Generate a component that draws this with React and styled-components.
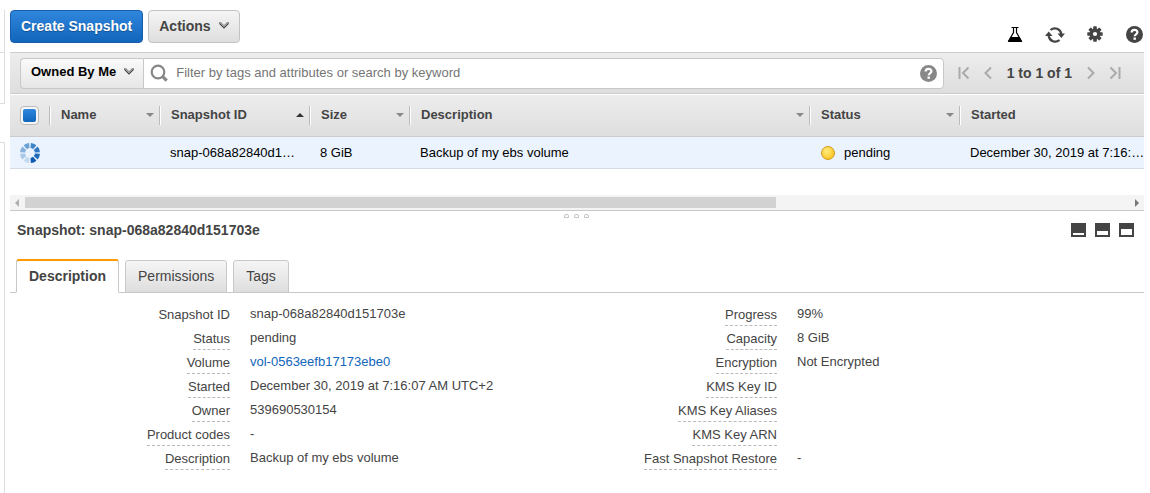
import React from "react";
import styled, { createGlobalStyle, css } from "styled-components";

const GlobalStyle = createGlobalStyle`
  *, *::before, *::after { box-sizing: border-box; }
  body {
    margin: 0;
    background: #fff;
    color: #444;
    font: 13px/16px "Liberation Sans", Arial, sans-serif;
  }
  button, input { font-family: inherit; }
`;

const Page = styled.div`
  display: flex;
  gap: 5px;
  min-height: 100vh;
  padding-right: 6px;
`;

const NavEdge = styled.aside`
  display: flex;
  flex-direction: column;
  flex: 0 0 5px;
  padding-top: 10px;
`;

const NavBlock = styled.div`
  height: ${(p) => p.$height};
  flex: ${(p) => (p.$fill ? "1" : "none")};
  margin-top: ${(p) => (p.$fill ? "38px" : "0")};
  border-right: 1px solid #ddd;
  border-top: ${(p) => (p.$fill ? "1px solid #ddd" : "0")};
  border-bottom: ${(p) => (p.$fill ? "0" : "1px solid #ddd")};
`;

const Main = styled.main`
  flex: 1;
  min-width: 0;
`;

const TopBar = styled.header`
  display: flex;
  gap: 5px;
  height: 52px;
  padding-top: 10px;
`;

const Button = styled.button`
  display: flex;
  align-items: center;
  gap: 8px;
  height: 33px;
  padding: 0 10px 2px;
  border: 1px solid #c3c3c3;
  border-radius: 4px;
  background: linear-gradient(#f5f5f5, #dedede);
  color: #444;
  font-size: 14px;
  font-weight: bold;
  white-space: nowrap;
  ${(p) =>
    p.$primary &&
    css`
      border-color: #1a5ca8;
      background: linear-gradient(#2f86dd, #1166bb);
      color: #fff;
      text-shadow: 0 1px 1px rgba(0, 0, 0, 0.3);
    `}
`;

const TopIcons = styled.div`
  display: flex;
  gap: 20px;
  margin-left: auto;
  padding: 14px 1px 0 0;
`;

const IconButton = styled.button`
  display: flex;
  align-items: center;
  justify-content: center;
  width: ${(p) => p.$width || 20}px;
  height: 20px;
  padding: 0;
  border: 0;
  background: none;
  color: ${(p) => p.$color || "#444"};
`;

const Toolbar = styled.section`
  display: flex;
  align-items: center;
  height: 42px;
  padding: 0 19px 0 10px;
  border: solid #ccc;
  border-width: 1px 0;
  background: linear-gradient(#ededed, #dedede);
`;

const OwnerButton = styled.button`
  display: flex;
  align-items: center;
  gap: 8px;
  height: 31px;
  padding: 0 9px 4px 10px;
  border: 1px solid #c8c8c8;
  border-right: 0;
  border-radius: 4px 0 0 4px;
  background: linear-gradient(#fafafa, #e6e6e6);
  color: #000;
  font-size: 13px;
  font-weight: bold;
  white-space: nowrap;
`;

const SearchBox = styled.div`
  display: flex;
  flex: 1;
  align-items: center;
  gap: 8px;
  height: 31px;
  padding: 0 4px 0 6px;
  border: 1px solid #c8c8c8;
  border-radius: 0 4px 4px 0;
  background: #fff;
`;

const SearchInput = styled.input`
  flex: 1;
  min-width: 0;
  height: 28px;
  padding: 0 0 2px;
  border: 0;
  outline: 0;
  background: none;
  color: #444;
  font-size: 13px;
  &::placeholder { color: #757575; opacity: 1; }
`;

const Pager = styled.nav`
  display: flex;
  align-items: center;
  gap: 4px;
  padding-left: 10px;
`;

const PageCount = styled.span`
  padding: 0 5px;
  font-size: 14px;
  font-weight: bold;
  white-space: nowrap;
`;

const TableScroller = styled.div`
  overflow: hidden;
`;

const Table = styled.table`
  width: calc(100% + 3px);
  table-layout: fixed;
  border-collapse: separate;
  border-spacing: 0;
`;

const Col = styled.col`
  width: ${(p) => (p.$width ? `${p.$width}px` : "auto")};
`;

const HeadCell = styled.th`
  height: 43px;
  padding: 0 0 1px;
  border-top: 1px solid #fff;
  border-bottom: 1px solid #ccc;
  background: linear-gradient(#ededed, #dedede);
  text-align: left;
`;

const HeadInner = styled.div`
  display: flex;
  align-items: center;
  justify-content: space-between;
  height: 19px;
  padding: 0 5px ${(p) => (p.$first ? 0 : 1)}px ${(p) => (p.$first ? 10 : 11)}px;
  border-left: ${(p) => (p.$first ? "0" : "1px solid #bbb")};
  box-shadow: ${(p) => (p.$first ? "none" : "inset 1px 0 #fff")};
`;

const SortArrow = styled.span`
  border: solid transparent;
  border-width: 0 4px;
  ${(p) =>
    p.$up
      ? css`border-bottom: 4px solid #333;`
      : css`border-top: 4px solid #888;`}
`;

const Checkbox = styled.input`
  appearance: none;
  width: 19px;
  height: 19px;
  margin: 0;
  border: 1px solid #bbb;
  border-radius: 4px;
  background: #f6f6f6;
  &:checked::before {
    content: "";
    display: block;
    height: 13px;
    margin: 2px;
    border-radius: 2px;
    background: linear-gradient(#2f86dd, #1166bb);
  }
`;

const Cell = styled.td`
  height: 32px;
  padding: 0 ${(p) => (p.$last ? 0 : 12)}px 0 ${(p) => (p.$icon ? 10 : 11)}px;
  overflow: hidden;
  border-bottom: 1px solid #d5dbe3;
  background: #eaf3fe;
  color: #000;
  text-overflow: ellipsis;
  white-space: nowrap;
  svg { display: block; }
`;

const StatusText = styled.span`
  display: flex;
  align-items: center;
  gap: 9px;
`;

const StatusDot = styled.span`
  width: 14px;
  height: 14px;
  margin-left: 1px;
  border: 1px solid #d19a1c;
  border-radius: 50%;
  background: radial-gradient(circle at 40% 35%, #ffec80, #fdc92c 70%, #eda81a);
`;

const ScrollBar = styled.div`
  display: flex;
  align-items: center;
  gap: 6px;
  height: 16px;
  margin-top: 26px;
  padding: 0 5px;
  border-bottom: 1px solid #c8c8c8;
  background: #f4f4f4;
`;

const ScrollTrack = styled.div`
  flex: 1;
  height: 11px;
`;

const ScrollThumb = styled.div`
  width: 68%;
  height: 100%;
  background: #d2d2d2;
`;

const ScrollArrow = styled.span`
  border: solid transparent;
  border-width: 4px 0;
  ${(p) =>
    p.$right
      ? css`border-left: 4px solid #777;`
      : css`border-right: 4px solid #b0b0b0;`}
`;

const Grip = styled.div`
  display: flex;
  justify-content: center;
  gap: 5px;
  height: 7px;
  padding: 3px 2px 0 0;
`;

const GripDot = styled.span`
  width: 5px;
  height: 4px;
  border: 1px solid #c4c4c4;
  border-radius: 2px 2px 0 0;
`;

const DetailHeader = styled.div`
  display: flex;
  align-items: center;
  justify-content: space-between;
  height: 24px;
  padding: 0 10px 0 7px;
`;

const DetailTitle = styled.h2`
  margin: 0;
  font-size: 14px;
  line-height: 18px;
`;

const PaneButtons = styled.div`
  display: flex;
  gap: 9px;
`;

const PaneButton = styled.button`
  display: flex;
  align-items: flex-end;
  width: 15px;
  height: 14px;
  padding: 2px;
  border: 0;
  background: #444;
  &::after {
    content: "";
    width: 11px;
    height: ${(p) => p.$fill}px;
    background: #fff;
  }
`;

const Tabs = styled.div`
  display: flex;
  align-items: flex-end;
  gap: 6px;
  height: 51px;
  padding-left: 6px;
  border-bottom: 1px solid #c8c8c8;
`;

const Tab = styled.button`
  height: 33px;
  margin-bottom: -1px;
  padding: 0 12px 2px;
  border: 1px solid #c8c8c8;
  border-radius: 3px 3px 0 0;
  background: linear-gradient(#f5f5f5, #dedede);
  color: #444;
  font-size: 14px;
  ${(p) =>
    p.$active &&
    css`
      height: 34px;
      border-top: 2px solid #f90;
      border-bottom-color: #fff;
      background: #fff;
      font-weight: bold;
    `}
`;

const Details = styled.div`
  display: grid;
  grid-template-columns: 1fr 1fr;
  padding: 9px 40px 20px 0;
`;

const DetailList = styled.dl`
  display: grid;
  grid-template-columns: 220px 1fr;
  grid-auto-rows: 24px;
  column-gap: 20px;
  margin: 0;
`;

const Term = styled.dt`
  justify-self: end;
  height: 24px;
  padding-top: 5px;
  border-bottom: ${(p) => (p.$plain ? "0" : "1px dashed #bbb")};
  white-space: nowrap;
`;

const Value = styled.dd`
  margin: 0;
  padding-top: 4px;
  white-space: nowrap;
`;

const Link = styled.a`
  color: #1166bb;
  text-decoration: none;
`;

const Chevron = () => (
  <svg width="10" height="7" viewBox="0 0 10 7" aria-hidden="true">
    <path d="M0 0h2l3 3 3-3h2v2L5 7 0 2z" fill="#999" />
    <path d="M.5 1.5 5 6l4.500-4.500" fill="none" stroke="#444" strokeWidth="1" />
  </svg>
);

const FlaskIcon = () => (
  <svg width="16" height="16" viewBox="0 0 16 16" aria-hidden="true">
    <path d="M4.500 1.500h7M6.500 1.500v5L2 14.500h12L9.500 6.500v-5" fill="none" stroke="currentColor" strokeWidth="1.200" />
    <path d="M3.500 11h9l2.800 5H.7z" fill="currentColor" />
  </svg>
);

const RefreshIcon = () => (
  <svg width="20" height="17" viewBox="0 0 20 17" aria-hidden="true">
    <path d="M5.500 4A6.500 6.500 0 0 1 16.300 8M14.500 14A6.500 6.500 0 0 1 3.700 10" fill="none" stroke="currentColor" strokeWidth="2.200" />
    <path d="M12.500 7.500H20L16.300 12zM0 10h7.500L3.700 5.500z" fill="currentColor" />
  </svg>
);

const GearIcon = () => (
  <svg width="16" height="16" viewBox="0 0 16 16" aria-hidden="true">
    <g fill="currentColor">
      {[0, 45, 90, 135].map((a) => (
        <rect key={a} x="6.200" y="0.300" width="3.600" height="15.400" rx=".6" transform={`rotate(${a} 8 8)`} />
      ))}
      <circle cx="8" cy="8" r="5.500" />
    </g>
    <circle cx="8" cy="8" r="2.100" fill="#fff" />
  </svg>
);

const HelpIcon = () => (
  <svg width="17" height="17" viewBox="0 0 17 17" aria-hidden="true">
    <circle cx="8.500" cy="8.500" r="8.500" fill="currentColor" />
    <path d="M5.600 6.500C5.600 3 11.400 3 11.400 6.300c0 2-2.700 2-2.700 4" fill="none" stroke="#fff" strokeWidth="2.200" />
    <rect x="7.500" y="11.500" width="2.400" height="2.300" fill="#fff" />
  </svg>
);

const SearchIcon = () => (
  <svg width="18" height="18" viewBox="0 0 18 18" aria-hidden="true">
    <circle cx="8" cy="8" r="6.300" fill="none" stroke="#888" strokeWidth="2.200" />
    <path d="m12.700 12.700 4 4" stroke="#888" strokeWidth="3.200" />
  </svg>
);

const PagerIcon = ({ end, flip }) => (
  <svg width="12" height="14" viewBox="0 0 12 14" aria-hidden="true">
    <path
      d={end ? "M1.500 1v12M10.500 1.500 5 7l5.500 5.500" : "M9 1.500 3.500 7 9 12.500"}
      fill="none"
      stroke="currentColor"
      strokeWidth="2"
      transform={flip ? "translate(12 0) scale(-1 1)" : undefined}
    />
  </svg>
);

const spinnerColors = [
  "#3f86c8", "#3079c2", "#1f6bb8", "#0f5bb0",
  "#c3daef", "#a8c8e8", "#86b1dd", "#6ba0d4",
];

const Spinner = () => (
  <svg width="20" height="20" viewBox="0 0 20 20" role="img" aria-label="Loading">
    {spinnerColors.map((color, i) => (
      <path key={color} d="M7 .5Q10-.6 13 .5L11.400 5.300Q10 4.800 8.600 5.300z" fill={color} transform={`rotate(${i * 45 + 22.5} 10 10)`} />
    ))}
  </svg>
);

const columns = [
  { label: "Name", width: 110 },
  { label: "Snapshot ID", width: 150, sorted: true },
  { label: "Size", width: 100 },
  { label: "Description", width: 400 },
  { label: "Status", width: 150 },
  { label: "Started" },
];

const leftDetails = [
  ["Snapshot ID", "snap-068a82840d151703e"],
  ["Status", "pending"],
  ["Volume", "vol-0563eefb17173ebe0"],
  ["Started", "December 30, 2019 at 7:16:07 AM UTC+2"],
  ["Owner", "539690530154"],
  ["Product codes", "-"],
  ["Description", "Backup of my ebs volume"],
];

const rightDetails = [
  ["Progress", "99%"],
  ["Capacity", "8 GiB"],
  ["Encryption", "Not Encrypted"],
  ["KMS Key ID", ""],
  ["KMS Key Aliases", ""],
  ["KMS Key ARN", ""],
  ["Fast Snapshot Restore", "-"],
];

const DetailColumn = ({ items }) => (
  <DetailList>
    {items.map(([term, value]) => (
      <React.Fragment key={term}>
        <Term $plain={term === "Snapshot ID"}>{term}</Term>
        <Value>{term === "Volume" ? <Link href="#volume">{value}</Link> : value}</Value>
      </React.Fragment>
    ))}
  </DetailList>
);

export default function App() {
  return (
    <Page>
      <GlobalStyle />
      <NavEdge>
        <NavBlock $height="43px" />
        <NavBlock $height="51px" />
        <NavBlock $fill />
      </NavEdge>
      <Main>
        <TopBar>
          <Button $primary>Create Snapshot</Button>
          <Button>Actions <Chevron /></Button>
          <TopIcons>
            <IconButton $color="#000" aria-label="Experiments"><FlaskIcon /></IconButton>
            <IconButton aria-label="Refresh"><RefreshIcon /></IconButton>
            <IconButton aria-label="Settings"><GearIcon /></IconButton>
            <IconButton $width={18} aria-label="Help"><HelpIcon /></IconButton>
          </TopIcons>
        </TopBar>

        <Toolbar>
          <OwnerButton>Owned By Me <Chevron /></OwnerButton>
          <SearchBox>
            <SearchIcon />
            <SearchInput aria-label="Filter snapshots" placeholder="Filter by tags and attributes or search by keyword" />
            <IconButton $color="#888" aria-label="Search help"><HelpIcon /></IconButton>
          </SearchBox>
          <Pager aria-label="Pages">
            <IconButton $color="#aaa" aria-label="First page"><PagerIcon end /></IconButton>
            <IconButton $color="#aaa" aria-label="Previous page"><PagerIcon /></IconButton>
            <PageCount>1 to 1 of 1</PageCount>
            <IconButton $color="#aaa" aria-label="Next page"><PagerIcon flip /></IconButton>
            <IconButton $color="#aaa" aria-label="Last page"><PagerIcon end flip /></IconButton>
          </Pager>
        </Toolbar>

        <TableScroller>
          <Table>
            <colgroup>
              <Col $width={39} />
              {columns.map((c) => <Col key={c.label} $width={c.width} />)}
            </colgroup>
            <thead>
              <tr>
                <HeadCell>
                  <HeadInner $first>
                    <Checkbox type="checkbox" defaultChecked aria-label="Select all" />
                  </HeadInner>
                </HeadCell>
                {columns.map((c) => (
                  <HeadCell key={c.label}>
                    <HeadInner>
                      {c.label}
                      {c.width && <SortArrow $up={c.sorted} />}
                    </HeadInner>
                  </HeadCell>
                ))}
              </tr>
            </thead>
            <tbody>
              <tr>
                <Cell $last $icon><Spinner /></Cell>
                <Cell />
                <Cell>snap-068a82840d151703e</Cell>
                <Cell>8 GiB</Cell>
                <Cell>Backup of my ebs volume</Cell>
                <Cell><StatusText><StatusDot />pending</StatusText></Cell>
                <Cell $last>December 30, 2019 at 7:16:07 AM UTC+2</Cell>
              </tr>
            </tbody>
          </Table>
        </TableScroller>

        <ScrollBar aria-hidden="true">
          <ScrollArrow />
          <ScrollTrack><ScrollThumb /></ScrollTrack>
          <ScrollArrow $right />
        </ScrollBar>
        <Grip aria-hidden="true"><GripDot /><GripDot /><GripDot /></Grip>

        <DetailHeader>
          <DetailTitle>Snapshot: snap-068a82840d151703e</DetailTitle>
          <PaneButtons>
            <PaneButton $fill={2} aria-label="Minimize details" />
            <PaneButton $fill={4} aria-label="Split view" />
            <PaneButton $fill={6} aria-label="Maximize details" />
          </PaneButtons>
        </DetailHeader>
        <Tabs role="tablist">
          <Tab role="tab" aria-selected="true" $active>Description</Tab>
          <Tab role="tab" aria-selected="false">Permissions</Tab>
          <Tab role="tab" aria-selected="false">Tags</Tab>
        </Tabs>
        <Details>
          <DetailColumn items={leftDetails} />
          <DetailColumn items={rightDetails} />
        </Details>
      </Main>
    </Page>
  );
}
